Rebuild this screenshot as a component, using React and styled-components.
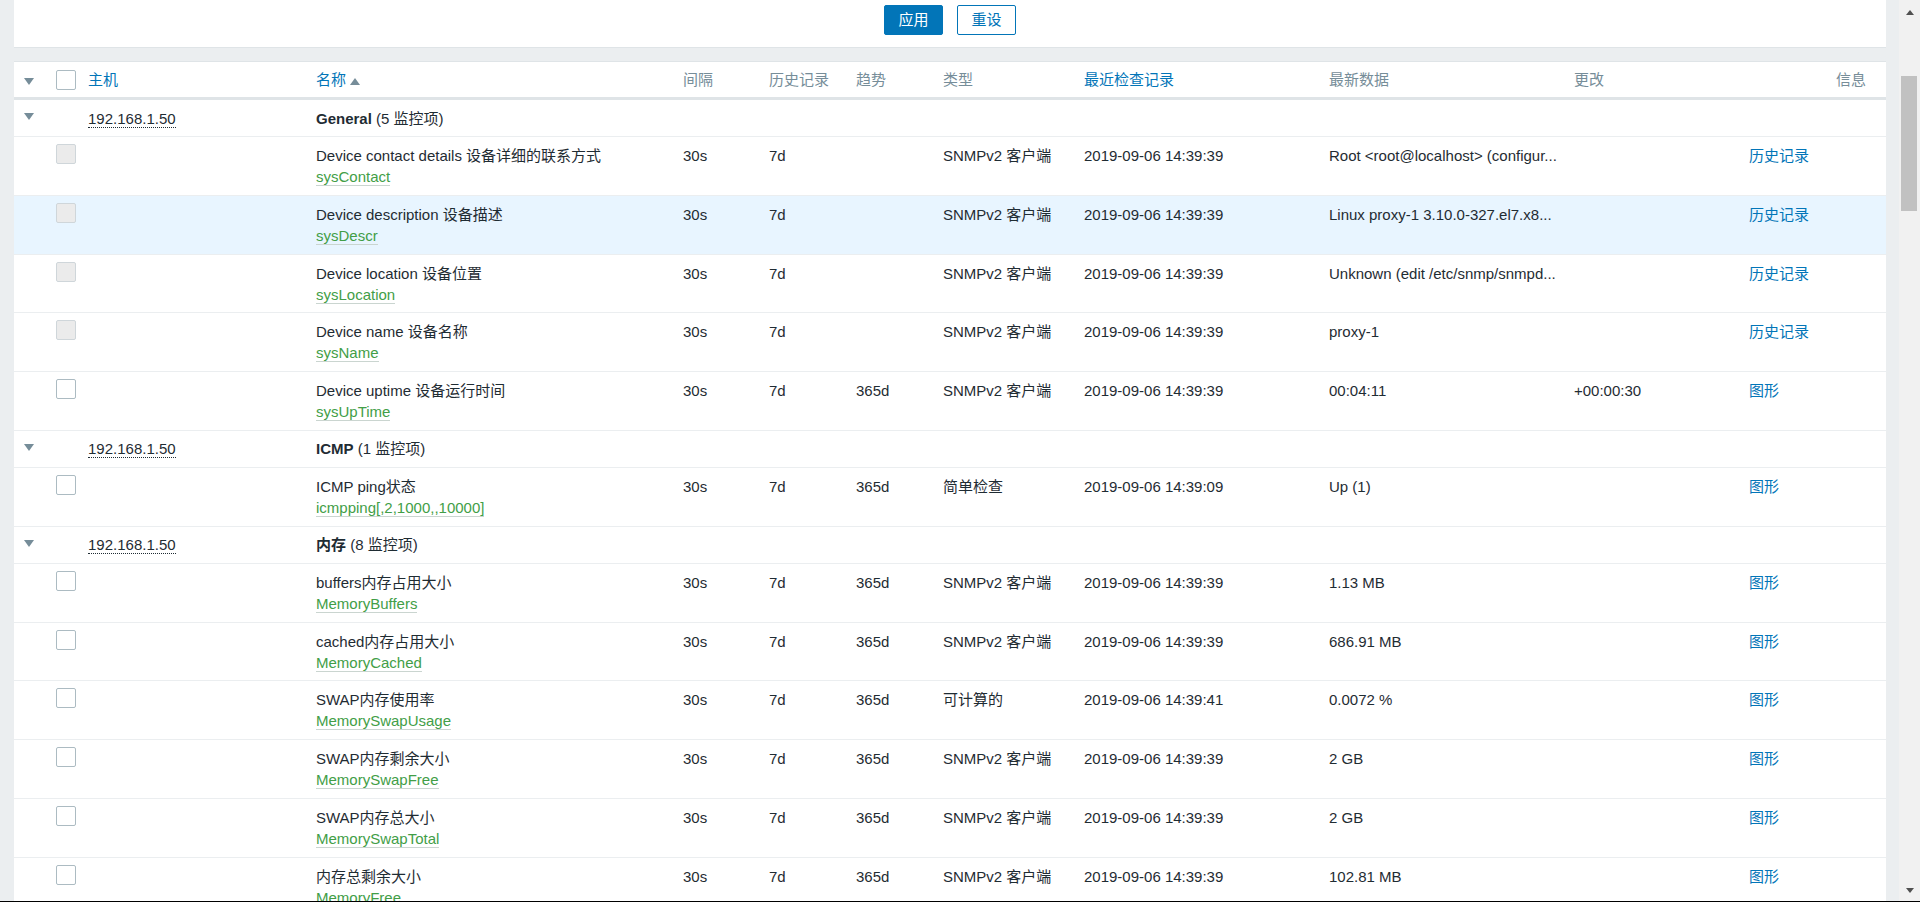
import React from "react";
import styled, { createGlobalStyle } from "styled-components";

const GlobalStyle = createGlobalStyle`
  html, body {
    margin: 0;
    padding: 0;
    overflow: hidden;
  }
  body {
    font-family: "Liberation Sans", Arial, "Noto Sans CJK SC", sans-serif;
    font-size: 15px;
    color: #1f2c33;
    background: #ebeef0;
  }
`;

const COLS = [42, 32, 228, 367, 86, 87, 87, 141, 245, 245, 175, 87, 50];

const groups = [
  {
    host: "192.168.1.50",
    name: "General",
    count: 5,
    items: [
      {
        name: "Device contact details 设备详细的联系方式",
        key: "sysContact",
        trends: "",
        value: "Root <root@localhost> (configur...",
        link: "历史记录",
        disabled: true,
      },
      {
        name: "Device description 设备描述",
        key: "sysDescr",
        trends: "",
        value: "Linux proxy-1 3.10.0-327.el7.x8...",
        link: "历史记录",
        disabled: true,
        active: true,
      },
      {
        name: "Device location 设备位置",
        key: "sysLocation",
        trends: "",
        value: "Unknown (edit /etc/snmp/snmpd...",
        link: "历史记录",
        disabled: true,
      },
      {
        name: "Device name 设备名称",
        key: "sysName",
        trends: "",
        value: "proxy-1",
        link: "历史记录",
        disabled: true,
      },
      {
        name: "Device uptime 设备运行时间",
        key: "sysUpTime",
        value: "00:04:11",
        change: "+00:00:30",
      },
    ],
  },
  {
    host: "192.168.1.50",
    name: "ICMP",
    count: 1,
    items: [
      {
        name: "ICMP ping状态",
        key: "icmpping[,2,1000,,10000]",
        type: "简单检查",
        checked: "2019-09-06 14:39:09",
        value: "Up (1)",
      },
    ],
  },
  {
    host: "192.168.1.50",
    name: "内存",
    count: 8,
    items: [
      { name: "buffers内存占用大小", key: "MemoryBuffers", value: "1.13 MB" },
      { name: "cached内存占用大小", key: "MemoryCached", value: "686.91 MB" },
      {
        name: "SWAP内存使用率",
        key: "MemorySwapUsage",
        type: "可计算的",
        checked: "2019-09-06 14:39:41",
        value: "0.0072 %",
      },
      { name: "SWAP内存剩余大小", key: "MemorySwapFree", value: "2 GB" },
      { name: "SWAP内存总大小", key: "MemorySwapTotal", value: "2 GB" },
      { name: "内存总剩余大小", key: "MemoryFree", value: "102.81 MB" },
      { name: "内存总大小", key: "MemoryTotal", value: "1.78 GB" },
      { name: "内存使用率", key: "MemoryUsage", type: "可计算的", value: "45.2 %" },
    ],
  },
];

const Screen = styled.div`
  display: flex;
  height: 902px;
  box-sizing: border-box;
  border-bottom: 1px solid #000;
  overflow: hidden;
`;

const Main = styled.main`
  flex: 1;
  min-width: 0;
  padding: 0 13px 0 14px;
  background: #ebeef0;
  overflow: hidden;
`;

const FilterPanel = styled.div`
  height: 48px;
  box-sizing: border-box;
  padding-top: 5px;
  background: #fff;
  border-bottom: 1px solid #dfe4e7;
  display: flex;
  justify-content: center;
  align-items: flex-start;
  gap: 14px;
`;

const Button = styled.button`
  height: 30px;
  padding: 0 13.5px;
  border-radius: 2px;
  border: 1px solid #0275b8;
  font-family: inherit;
  font-size: 15px;
  line-height: 28px;
  cursor: pointer;
  background: ${({ $alt }) => ($alt ? "#fff" : "#0275b8")};
  color: ${({ $alt }) => ($alt ? "#0275b8" : "#fff")};
`;

const ListPanel = styled.section`
  margin-top: 13px;
  background: #fff;
  border-top: 1px solid #dfe4e7;
`;

const Table = styled.table`
  width: 100%;
  table-layout: fixed;
  border-collapse: separate;
  border-spacing: 0;
`;

const Col = styled.col`
  width: ${({ $w }) => $w}px;
`;

const Th = styled.th`
  padding: 7.5px 0;
  padding-left: ${({ $first }) => ($first ? "10px" : "0")};
  text-align: left;
  font-weight: normal;
  vertical-align: middle;
  line-height: 20px;
  white-space: nowrap;
  color: ${({ $link }) => ($link ? "#0275b8" : "#768d99")};
  border-bottom: 3px solid #dfe4e7;
`;

const Td = styled.td`
  padding: ${({ $group }) => ($group ? "8.5px 0 7.5px" : "9px 0 7.8px")};
  padding-left: ${({ $first }) => ($first ? "10px" : "0")};
  vertical-align: top;
  line-height: 20px;
  white-space: nowrap;
  overflow: hidden;
  border-bottom: 1px solid #ebeef0;
  background: ${({ $active }) => ($active ? "#e8f5ff" : "transparent")};
`;

const Caret = styled.span`
  display: block;
  width: 0;
  height: 0;
  margin-top: ${({ $offset }) => $offset}px;
  border-left: 5px solid transparent;
  border-right: 5px solid transparent;
  border-top: 7px solid #768d99;
`;

const SortArrow = styled.span`
  display: inline-block;
  width: 0;
  height: 0;
  margin-left: 4px;
  border-left: 5px solid transparent;
  border-right: 5px solid transparent;
  border-bottom: 7px solid #768d99;
`;

const Checkbox = styled.span`
  display: block;
  width: 20px;
  height: 20px;
  box-sizing: border-box;
  margin-top: ${({ $offset }) => $offset}px;
  border-radius: 2px;
  border: 1px solid ${({ $disabled }) => ($disabled ? "#cfd6da" : "#acbbc2")};
  background: ${({ $disabled }) => ($disabled ? "#ebebeb" : "#fff")};
`;

const HostName = styled.span`
  border-bottom: 1px dotted #1f2c33;
`;

const GroupTitle = styled.span`
  b {
    font-weight: bold;
  }
`;

const ItemName = styled.div`
  line-height: 20px;
`;

const ItemKey = styled.div`
  line-height: 21px;
  span {
    color: #429e47;
    border-bottom: 1px solid #cad5d0;
  }
`;

const ActionLink = styled.span`
  color: #0275b8;
  cursor: pointer;
`;

const Scrollbar = styled.div`
  width: 21px;
  flex-shrink: 0;
  background: #f1f1f1;
  display: flex;
  flex-direction: column;
`;

const ScrollArrow = styled.div`
  height: ${({ $down }) => ($down ? "21px" : "25px")};
  display: flex;
  align-items: center;
  justify-content: center;
  &::before {
    content: "";
    border-left: 4.5px solid transparent;
    border-right: 4.5px solid transparent;
    ${({ $down }) =>
      $down
        ? "border-top: 5px solid #505050;"
        : "border-bottom: 5px solid #505050;"}
  }
`;

const ScrollTrack = styled.div`
  flex: 1;
`;

const ScrollThumb = styled.div`
  margin: 51px 3px 0 2px;
  height: 135px;
  background: #c1c1c1;
`;

const HeaderRow = () => (
  <tr>
    <Th $first>
      <Caret $offset={4} />
    </Th>
    <Th>
      <Checkbox $offset={0} />
    </Th>
    <Th $link>主机</Th>
    <Th $link>
      名称
      <SortArrow />
    </Th>
    <Th>间隔</Th>
    <Th>历史记录</Th>
    <Th>趋势</Th>
    <Th>类型</Th>
    <Th $link>最近检查记录</Th>
    <Th>最新数据</Th>
    <Th>更改</Th>
    <Th />
    <Th>信息</Th>
  </tr>
);

const GroupRow = ({ group }) => (
  <tr>
    <Td $group $first>
      <Caret $offset={4.5} />
    </Td>
    <Td $group />
    <Td $group>
      <HostName>{group.host}</HostName>
    </Td>
    <Td $group colSpan={10}>
      <GroupTitle>
        <b>{group.name}</b> ({group.count} 监控项)
      </GroupTitle>
    </Td>
  </tr>
);

const ItemRow = ({ item }) => {
  const a = item.active;
  return (
    <tr>
      <Td $first $active={a} />
      <Td $active={a}>
        <Checkbox $disabled={item.disabled} $offset={-2} />
      </Td>
      <Td $active={a} />
      <Td $active={a}>
        <ItemName>{item.name}</ItemName>
        <ItemKey>
          <span>{item.key}</span>
        </ItemKey>
      </Td>
      <Td $active={a}>30s</Td>
      <Td $active={a}>7d</Td>
      <Td $active={a}>{item.trends ?? "365d"}</Td>
      <Td $active={a}>{item.type ?? "SNMPv2 客户端"}</Td>
      <Td $active={a}>{item.checked ?? "2019-09-06 14:39:39"}</Td>
      <Td $active={a}>{item.value}</Td>
      <Td $active={a}>{item.change ?? ""}</Td>
      <Td $active={a}>
        <ActionLink>{item.link ?? "图形"}</ActionLink>
      </Td>
      <Td $active={a} />
    </tr>
  );
};

export default function App() {
  return (
    <>
      <GlobalStyle />
      <Screen>
        <Main>
          <FilterPanel>
            <Button type="button">应用</Button>
            <Button type="button" $alt>
              重设
            </Button>
          </FilterPanel>
          <ListPanel>
            <Table>
              <colgroup>
                {COLS.map((w, i) => (
                  <Col key={i} $w={w} />
                ))}
              </colgroup>
              <thead>
                <HeaderRow />
              </thead>
              <tbody>
                {groups.map((g, gi) => (
                  <React.Fragment key={gi}>
                    <GroupRow group={g} />
                    {g.items.map((item) => (
                      <ItemRow key={item.key} item={item} />
                    ))}
                  </React.Fragment>
                ))}
              </tbody>
            </Table>
          </ListPanel>
        </Main>
        <Scrollbar>
          <ScrollArrow />
          <ScrollTrack>
            <ScrollThumb />
          </ScrollTrack>
          <ScrollArrow $down />
        </Scrollbar>
      </Screen>
    </>
  );
}
